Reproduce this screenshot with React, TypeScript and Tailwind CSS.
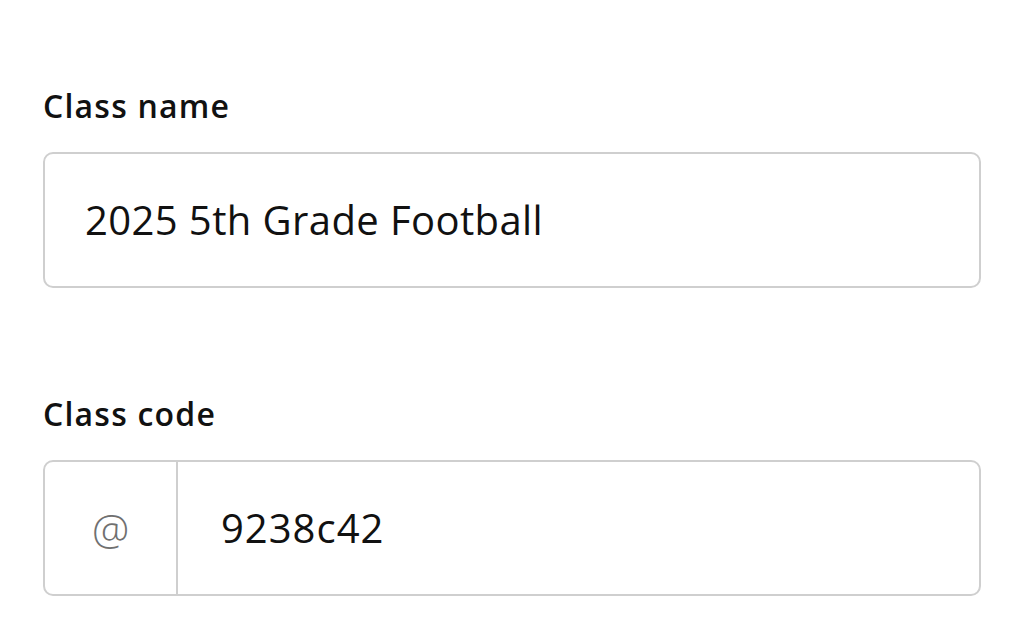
export default function App() {
  return (
    <div
      className="w-[1024px] h-[640px] bg-white px-[43px] pt-[84px]"
      style={{ fontFamily: '"Open Sans", "Noto Sans", sans-serif' }}
    >
      <div className="flex flex-col">
        <label className="text-[32px] font-semibold leading-[44px] tracking-[1.2px] text-[#111]">Class name</label>
        <div className="mt-[24px] h-[136px] rounded-[10px] border-2 border-[#cfcfcf] flex items-center pl-[40px]">
          <span className="text-[40px] tracking-[0.4px] text-[#111]">2025 5th Grade Football</span>
        </div>
      </div>

      <div className="flex flex-col mt-[104px]">
        <label className="text-[32px] font-semibold leading-[44px] tracking-[1.2px] text-[#111]">Class code</label>
        <div className="mt-[24px] h-[136px] rounded-[10px] border-2 border-[#cfcfcf] flex">
          <div className="w-[133px] border-r-2 border-[#cfcfcf] flex items-center justify-center">
            <span className="text-[42px] font-light text-[#707070]">@</span>
          </div>
          <div className="flex items-center pl-[43px]">
            <span className="text-[40px] tracking-[1px] text-[#111]">9238c42</span>
          </div>
        </div>
      </div>
    </div>
  )
}
